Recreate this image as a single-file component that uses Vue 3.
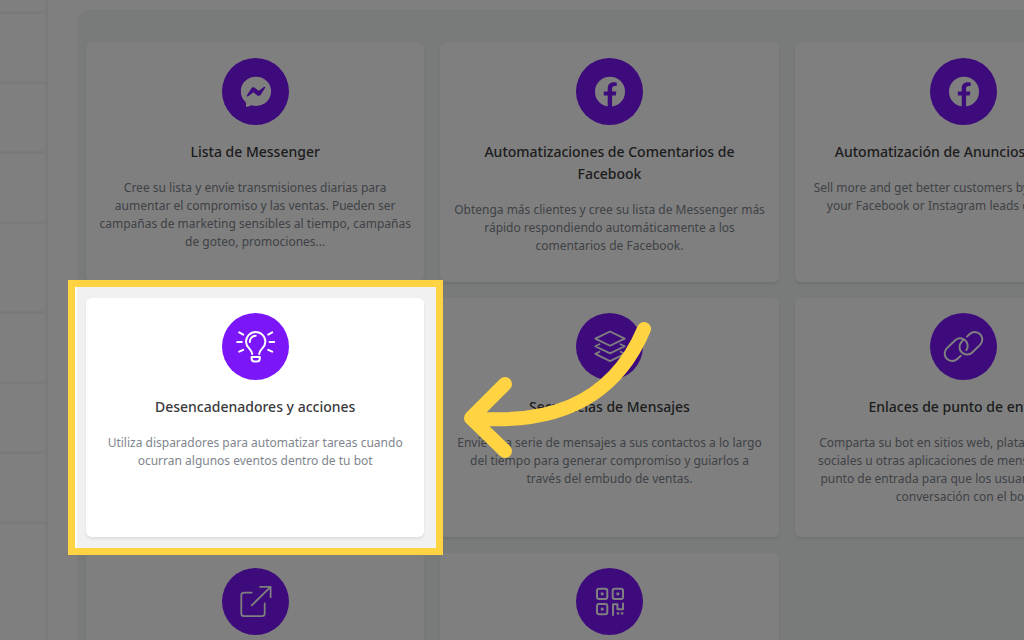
<script setup>
const sidebarGroups = [4, 4]

const cards = [
  {
    icon: 'messenger',
    title: 'Lista de Messenger',
    text: 'Cree su lista y envíe transmisiones diarias para\naumentar el compromiso y las ventas. Pueden ser\ncampañas de marketing sensibles al tiempo, campañas\nde goteo, promociones...',
  },
  {
    icon: 'facebook',
    title: 'Automatizaciones de Comentarios de\nFacebook',
    text: 'Obtenga más clientes y cree su lista de Messenger más\nrápido respondiendo automáticamente a los\ncomentarios de Facebook.',
  },
  {
    icon: 'facebook',
    title: 'Automatización de Anuncios Facebook',
    text: 'Sell more and get better customers by automating all\nyour Facebook or Instagram leads conversations',
  },
  {
    icon: 'bulb',
    title: 'Desencadenadores y acciones',
    text: 'Utiliza disparadores para automatizar tareas cuando\nocurran algunos eventos dentro de tu bot',
    active: true,
  },
  {
    icon: 'layers',
    title: 'Secuencias de Mensajes',
    text: 'Envíe una serie de mensajes a sus contactos a lo largo\ndel tiempo para generar compromiso y guiarlos a\ntravés del embudo de ventas.',
  },
  {
    icon: 'link',
    title: 'Enlaces de punto de entrada',
    text: 'Comparta su bot en sitios web, plataformas y redes\nsociales u otras aplicaciones de mensajería. Cree un\npunto de entrada para que los usuarios inicien una\nconversación con el bot.',
  },
  { icon: 'external', title: '', text: '' },
  { icon: 'qr', title: '', text: '' },
]
</script>

<template>
  <div class="page">
    <aside class="sidebar">
      <div v-for="(count, g) in sidebarGroups" :key="g" class="group">
        <div v-for="n in count" :key="n" class="slot"></div>
      </div>
    </aside>

    <main class="main">
      <section class="panel">
        <article v-for="(card, i) in cards" :key="i" class="card" :class="{ active: card.active }">
          <div class="badge">
            <svg viewBox="0 0 67 67" aria-hidden="true">
              <g v-if="card.icon === 'messenger'">
                <path class="solid" d="M34 18.7C25.400 18.700 18.800 24.900 18.800 33.200C18.800 37.600 20.600 41.300 23.500 43.900C23.800 44.100 23.900 44.500 23.900 44.800L24 47.700C24 48.600 24.900 49.200 25.800 48.800L29 47.400C29.300 47.300 29.500 47.300 29.800 47.300C31.200 47.700 32.500 47.900 34 47.900C42.500 47.900 49.100 41.600 49.100 33.300C49.100 24.900 42.500 18.700 34 18.700Z" />
                <path class="cut" d="M24.800 37.500L29.300 30.400C30 29.300 31.600 29 32.700 29.800L36.200 32.400C36.500 32.700 37 32.700 37.300 32.400L42.100 28.800C42.700 28.300 43.600 29.100 43.200 29.700L38.700 36.800C38 37.900 36.500 38.200 35.400 37.400L31.900 34.800C31.600 34.500 31.100 34.500 30.800 34.800L26 38.400C25.300 38.900 24.400 38.100 24.800 37.500Z" />
              </g>
              <g v-else-if="card.icon === 'facebook'">
                <circle class="solid" cx="34" cy="33.700" r="15" />
                <path class="cut" d="M31.700 50V37.400H27.800V33.500H31.700V30.600C31.700 26.500 34 24.300 37.700 24.300C39.300 24.300 40.700 24.600 40.700 24.600V28H38.700C36.700 28 36.100 29.200 36.100 30.700V33.500H40.400L39.700 37.400H36.100V50Z" />
              </g>
              <g v-else-if="card.icon === 'bulb'" class="line bold">
                <path d="M30.200 41C30 36 24 35 24 28.700A9.700 9.700 0 0 1 43.400 28.700C43.400 35 37.400 36 37.200 41" />
                <path d="M27.800 29A6 6 0 0 1 33.700 22.700" />
                <path d="M29.600 43.900H37.800V45.500Q37.800 48.400 35 48.400H32.400Q29.600 48.400 29.600 45.500Z" />
                <path d="M15.200 29H19.800M17.200 19.400L21.200 21.600M17.200 38.700L21.200 36.900M52.200 29H47.600M50.200 19.400L46.200 21.600M50.200 38.700L46.200 36.900" />
              </g>
              <g v-else-if="card.icon === 'layers'" class="line">
                <path d="M34 18.500L48.700 25.600L34 32.700L19.300 25.600Z" />
                <path d="M23.500 31.200L19.300 33.300L34 40.400L48.700 33.300L44.500 31.200" />
                <path d="M23.500 38.800L19.300 40.900L34 48.100L48.700 40.900L44.500 38.800" />
              </g>
              <g v-else-if="card.icon === 'link'" class="line bold">
                <path d="M37 23.600L39.700 21A7.500 7.500 0 0 1 50.300 31.600L42.500 39.200A7.500 7.500 0 0 1 31.500 29Q32.600 27.400 33.400 26.800" />
                <path d="M30.800 42.800L27.300 46A7.500 7.500 0 0 1 16.700 35.400L25.500 27A7.500 7.500 0 0 1 36.300 37.200" />
              </g>
              <g v-else-if="card.icon === 'external'" class="line">
                <path d="M29.700 24.600H22Q19.300 24.600 19.300 27.300V45.500Q19.300 48.200 22 48.200H40Q42.700 48.200 42.700 45.500V35.500" />
                <path d="M29.700 37.400L48.600 18.800M38 18.800H48.600V29.200" />
              </g>
              <g v-else class="line bold">
                <rect x="21" y="20.700" width="10.300" height="10.300" rx="2" />
                <rect x="36.700" y="20.700" width="10.300" height="10.300" rx="2" />
                <rect x="21" y="36" width="10.300" height="10.300" rx="2" />
                <path d="M37 47V36.300H41.400V41.300H47V35.500" />
                <path class="solid dots" d="M24.800 24.500h2.800v2.800h-2.800zM40.500 24.500h2.800v2.800h-2.800zM24.800 39.800h2.800v2.800h-2.800zM40.800 44.200h2.400v2.400h-2.400zM44.900 44.200h2.400v2.400h-2.400z" />
              </g>
            </svg>
          </div>
          <h3 v-if="card.title" class="title">{{ card.title }}</h3>
          <p v-if="card.text" class="text">{{ card.text }}</p>
          <svg v-if="card.active" class="arrow" viewBox="460 320 200 145" aria-hidden="true">
            <path d="M644 329C610 410 540 424 472 418M505 384L471 418L505 451" />
          </svg>
        </article>
      </section>
    </main>
  </div>
</template>

<style>
body {
  margin: 0;
  background: #fff;
}
</style>

<style scoped>
.page {
  display: flex;
  height: 100vh;
  overflow: hidden;
  font-family: "Noto Sans", "Open Sans", sans-serif;
}

.sidebar {
  flex: none;
  box-sizing: border-box;
  width: 48px;
  padding-top: 11px;
  border-right: 3px solid #f1f6f4;
}

.group {
  display: grid;
  gap: 67px;
  margin-bottom: 87px;
}

.slot {
  height: 3px;
  background: #f1f6f4;
}

.main {
  flex: 1;
  min-width: 0;
  padding: 10px 0 0 29px;
}

.panel {
  display: grid;
  grid-template-columns: repeat(3, 1fr);
  grid-auto-rows: minmax(239px, auto);
  gap: 16px;
  margin-right: -118px;
  padding: 33px 9px;
  border-radius: 14px;
  background: #f1f6f4;
}

.card {
  position: relative;
  box-sizing: border-box;
  min-width: 0;
  padding: 15px;
  border-radius: 6px;
  background: #fff;
  box-shadow: 0 2px 3px rgba(0, 0, 0, 0.08);
  text-align: center;
}

.active {
  z-index: 1;
  background: none;
  box-shadow: none;
}

/* Spotlight frame that dims everything around the active card */
.active::before {
  content: "";
  position: absolute;
  z-index: -2;
  inset: -18px -19px -18px -18px;
  border: 7px solid #ffd341;
  background: #f1f1f1;
  box-shadow: inset 2px 0 #fff, 0 0 0 200vmax rgba(0, 0, 0, 0.5);
}

.active::after {
  content: "";
  position: absolute;
  z-index: -1;
  inset: 0;
  border-radius: 6px;
  background: #fff;
  box-shadow: 0 2px 3px rgba(0, 0, 0, 0.08);
}

.badge {
  width: 67px;
  height: 67px;
  margin: 0 auto 16px;
  border-radius: 50%;
  background: #7b16f8;
}

.badge svg {
  display: block;
  width: 100%;
  height: 100%;
}

.solid {
  fill: #fff;
}

.cut {
  fill: #7b16f8;
}

.line {
  fill: none;
  stroke: #fff;
  stroke-width: 1.8;
  stroke-linecap: round;
  stroke-linejoin: round;
}

.bold {
  stroke-width: 2;
}

.solid.dots {
  fill: #fff;
  stroke: none;
}

.title {
  margin: 0 0 16px;
  color: #3a3a3c;
  font-size: 14px;
  font-weight: 500;
  line-height: 22px;
  white-space: pre;
}

.text {
  margin: 0;
  color: #80858d;
  font-size: 12px;
  line-height: 18px;
  white-space: pre;
}

.title,
.text {
  display: flex;
  justify-content: center;
}

.arrow {
  position: absolute;
  top: 22px;
  left: 374px;
  width: 200px;
  height: 145px;
  fill: none;
  stroke: #ffd341;
  stroke-width: 14;
  stroke-linecap: round;
  stroke-linejoin: round;
}
</style>
